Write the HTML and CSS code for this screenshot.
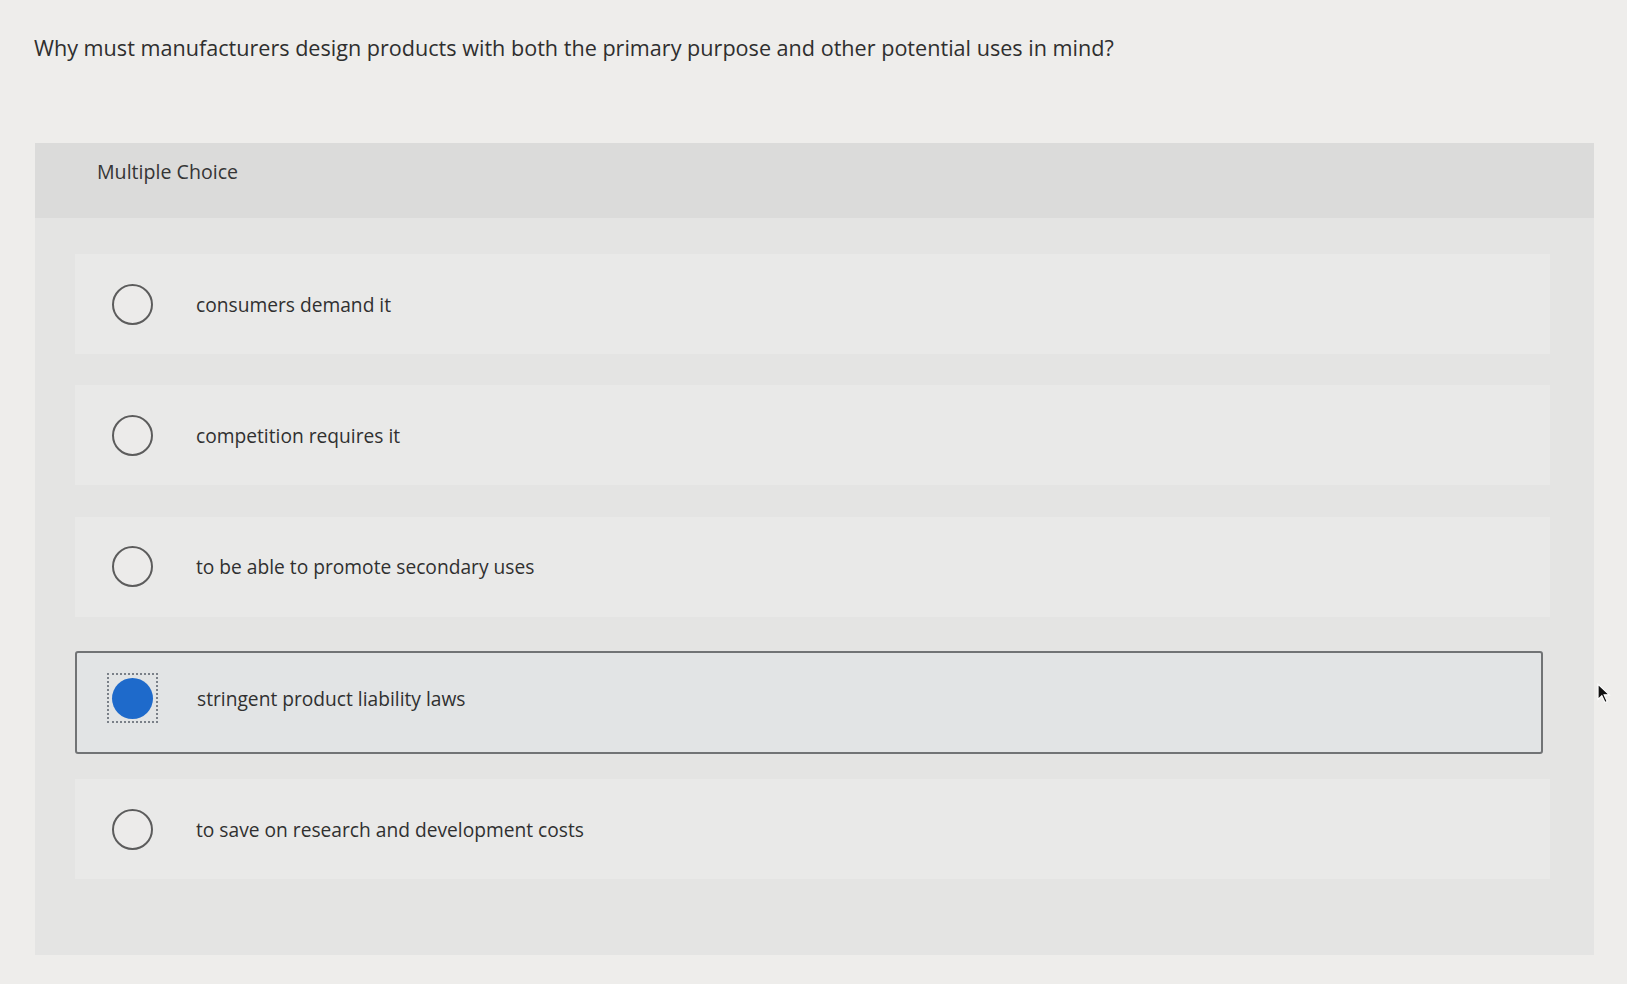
FILE: index.html
```html
<!DOCTYPE html>
<html lang="en">
<head>
<meta charset="utf-8">
<title>Multiple Choice</title>
<link rel="stylesheet" href="styles.css">
</head>
<body>
<main class="page">
  <h1 class="question">Why must manufacturers design products with both the primary purpose and other potential uses in mind?</h1>
  <section class="panel">
    <header class="panel-head">Multiple Choice</header>
    <div class="options">
      <label class="option">
        <span class="radio"></span>
        <span class="label">consumers demand it</span>
      </label>
      <label class="option">
        <span class="radio"></span>
        <span class="label">competition requires it</span>
      </label>
      <label class="option">
        <span class="radio"></span>
        <span class="label">to be able to promote secondary uses</span>
      </label>
      <label class="option selected">
        <span class="focus"><span class="radio checked"></span></span>
        <span class="label">stringent product liability laws</span>
      </label>
      <label class="option">
        <span class="radio"></span>
        <span class="label">to save on research and development costs</span>
      </label>
    </div>
  </section>
  <svg class="cursor" width="15" height="22" viewBox="0 0 14 20"><path d="M1 1 L1 15 L4.5 11.5 L7.5 18 L9.5 17 L6.6 10.8 L11.5 10.8 Z" fill="#111" stroke="#fff" stroke-width="1"/></svg>
</main>
</body>
</html>
```
FILE: styles.css
```css
* { box-sizing: border-box; }
html, body { margin: 0; padding: 0; }
body {
  background: #eeedeb;
  font-family: "Open Sans", Lato, "Liberation Sans", sans-serif;
  color: #333;
}
.page {
  position: relative;
  width: 1627px;
  height: 984px;
  padding: 33px 33px 0 35px;
}
.question {
  margin: 0 0 0 -1px;
  font-size: 21.6px;
  font-weight: 400;
  line-height: 30px;
  height: 110px;
  color: #2f2f2f;
}
.panel {
  background: #e4e4e3;
  width: 1559px;
  height: 812px;
}
.panel-head {
  background: #dbdbda;
  height: 75px;
  padding: 17px 0 0 62px;
  font-size: 19.6px;
  line-height: 24px;
  color: #353535;
}
.options {
  display: flex;
  flex-direction: column;
  gap: 31.3px;
  padding: 36px 44px 0 40px;
}
.option {
  display: flex;
  align-items: center;
  height: 100px;
  background: #e9e9e8;
  padding-left: 37px;
  font-size: 19.2px;
  color: #303030;
}
.radio {
  width: 41px;
  height: 41px;
  border: 2px solid #5c5c5c;
  border-radius: 50%;
  flex: none;
  background: #ecebea;
}
.label {
  margin-left: 43px;
}
.option.selected {
  background: #e2e4e5;
  border: 2px solid #717375;
  border-radius: 3px;
  padding-left: 30px;
  padding-bottom: 8px;
  width: 1468px;
  height: 103px;
  margin-top: 3px;
  margin-bottom: -6px;
}
.focus {
  width: 51px;
  height: 50px;
  border: 2px dotted #7a8088;
  display: flex;
  align-items: center;
  justify-content: center;
  flex: none;
}
.radio.checked {
  width: 41px;
  height: 41px;
  border: none;
  background: #1e6acb;
}
.option.selected .label {
  margin-left: 39px;
}
.cursor {
  position: absolute;
  left: 1597px;
  top: 683px;
}
```
